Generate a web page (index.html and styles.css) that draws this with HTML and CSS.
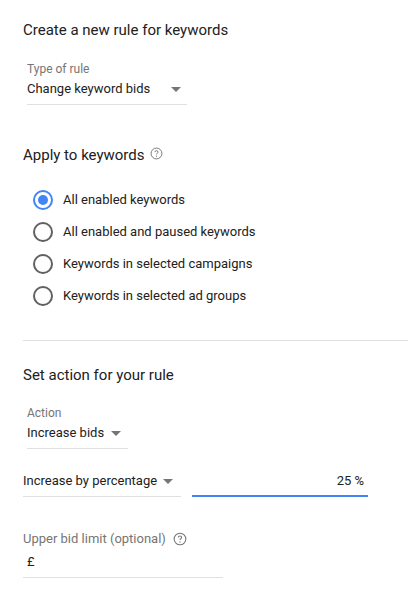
FILE: index.html
```
<!DOCTYPE html>
<html>
<head>
<meta charset="utf-8">
<link rel="stylesheet" href="styles.css">
</head>
<body>
<div class="panel">
  <section class="section first">
    <h2 class="title">Create a new rule for keywords</h2>
    <div class="select select-type">
      <div class="label">Type of rule</div>
      <div class="value"><span>Change keyword bids</span><span class="arrow"></span></div>
    </div>
    <h2 class="title apply">Apply to keywords
      <svg class="help small" viewBox="0 0 24 24"><circle cx="12" cy="12" r="10" fill="none" stroke="#757575" stroke-width="1.8"/><path d="M9.2 9.5a2.8 2.8 0 0 1 5.6 0c0 1.9-2.8 2.1-2.8 4.3" fill="none" stroke="#757575" stroke-width="1.8"/><circle cx="12" cy="17" r="1.1" fill="#757575"/></svg>
    </h2>
    <div class="radios">
      <label class="radio checked"><span class="dot"></span>All enabled keywords</label>
      <label class="radio"><span class="dot"></span>All enabled and paused keywords</label>
      <label class="radio"><span class="dot"></span>Keywords in selected campaigns</label>
      <label class="radio"><span class="dot"></span>Keywords in selected ad groups</label>
    </div>
  </section>
  <section class="section second">
    <h2 class="title">Set action for your rule</h2>
    <div class="select select-action">
      <div class="label">Action</div>
      <div class="value"><span>Increase bids</span><span class="arrow"></span></div>
    </div>
    <div class="row">
      <div class="select select-by">
        <div class="value"><span>Increase by percentage</span><span class="arrow"></span></div>
      </div>
      <div class="input-pct">25 %</div>
    </div>
    <div class="limit">
      <div class="label">Upper bid limit (optional)
        <svg class="help" viewBox="0 0 24 24"><circle cx="12" cy="12" r="10" fill="none" stroke="#757575" stroke-width="1.8"/><path d="M9.2 9.5a2.8 2.8 0 0 1 5.6 0c0 1.9-2.8 2.1-2.8 4.3" fill="none" stroke="#757575" stroke-width="1.8"/><circle cx="12" cy="17" r="1.1" fill="#757575"/></svg>
      </div>
      <div class="value currency">£</div>
    </div>
  </section>
</div>
</body>
</html>
```
FILE: styles.css
```
html, body {
  margin: 0;
  padding: 0;
  background: #fff;
}
body {
  font-family: Roboto, "Liberation Sans", sans-serif;
  color: #212121;
  width: 408px;
  height: 598px;
  overflow: hidden;
}
.panel {
  display: flex;
  flex-direction: column;
}
.section {
  margin-left: 23px;
}
.first {
  padding-top: 20px;
  height: 320px;
  border-bottom: 1px solid #e0e0e0;
}
.title {
  margin: 0;
  font-size: 15px;
  font-weight: 400;
  line-height: 20px;
  color: #212121;
  display: flex;
  align-items: center;
}
.select {
  display: inline-flex;
  flex-direction: column;
  border-bottom: 1px solid #e0e0e0;
}
.label {
  font-size: 12px;
  line-height: 16px;
  color: #757575;
  display: flex;
  align-items: center;
}
.value {
  font-size: 13px;
  line-height: 18px;
  color: #212121;
  display: flex;
  align-items: center;
  justify-content: space-between;
}
.select .label + .value {
  margin-top: 3px;
}
.arrow {
  width: 0;
  height: 0;
  border-left: 5px solid transparent;
  border-right: 5px solid transparent;
  border-top: 5px solid #757575;
}
.select-type {
  margin: 21px 0 0 4px;
  width: 160px;
  padding-bottom: 6px;
}
.select-type .arrow { margin-right: 6px; }
.apply {
  margin-top: 40px;
}
.help {
  width: 13px;
  height: 13px;
  margin-left: 5px;
  margin-top: -4px;
}
.radios {
  margin-top: 25px;
  margin-left: 10px;
  display: flex;
  flex-direction: column;
  gap: 12px;
}
.radio {
  display: flex;
  align-items: center;
  font-size: 13px;
  line-height: 20px;
  color: #212121;
}
.dot {
  box-sizing: border-box;
  width: 20px;
  height: 20px;
  border: 2px solid #616161;
  border-radius: 50%;
  margin-right: 10px;
  position: relative;
}
.radio.checked .dot {
  border-color: #4285f4;
}
.radio.checked .dot::after {
  content: "";
  position: absolute;
  left: 3px;
  top: 3px;
  width: 10px;
  height: 10px;
  border-radius: 50%;
  background: #4285f4;
}
.second {
  padding-top: 24px;
}
.select-action {
  margin: 20px 0 0 4px;
  width: 101px;
  padding-bottom: 6px;
}
.select-action .value { justify-content: flex-start; gap: 7px; }
.row {
  display: flex;
  align-items: flex-end;
  margin-top: 23px;
  gap: 11px;
}
.select-by {
  width: 158px;
  padding-bottom: 6px;
}
.select-by .arrow { margin-right: 8px; }
.input-pct {
  width: 176px;
  font-size: 13px;
  line-height: 18px;
  text-align: right;
  box-sizing: border-box;
  padding-right: 4px;
  padding-bottom: 5px;
  border-bottom: 2px solid #4285f4;
  color: #212121;
}
.limit {
  margin-top: 33px;
  width: 200px;
  border-bottom: 1px solid #e0e0e0;
  padding-bottom: 6px;
}
.limit .label {
  font-size: 13px;
  line-height: 18px;
}
.limit .help { width: 14px; height: 14px; margin-left: 7px; margin-top: 0; }
.currency {
  margin-top: 5px;
  padding-left: 4px;
}
```
